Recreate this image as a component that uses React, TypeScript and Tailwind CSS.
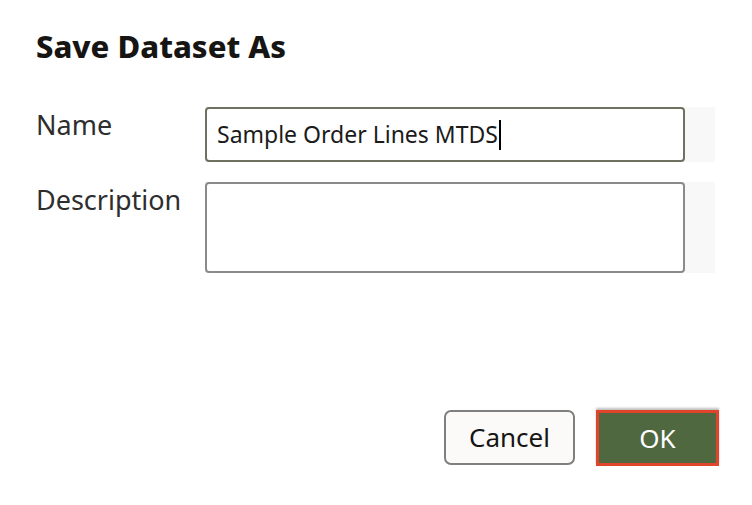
import React from "react";

export default function App() {
  const font = { fontFamily: '"Noto Sans", "Open Sans", sans-serif' };
  return (
    <div className="w-[752px] h-[505px] bg-white overflow-hidden flex flex-col" style={font}>
      <div className="pl-[36px] pt-[26px] text-[31px] leading-[40px] font-extrabold text-[#161513]">
        Save Dataset As
      </div>
      <div className="mt-[41px] flex flex-col gap-[20px] pl-[36px]">
        <div className="flex items-start">
          <div className="w-[169px] text-[27px] leading-[36px] text-[#2e2e2e]">Name</div>
          <div className="w-[510px] bg-[#f8f8f8]">
            <div className="w-[480px] h-[55px] border-2 border-[#6c725f] rounded-[4px] bg-white flex items-center pl-[10px] text-[23px] text-[#1b1b1b]">
              <span>Sample Order Lines MTDS</span>
              <span className="w-[2px] h-[30px] bg-black ml-[1px]" />
            </div>
          </div>
        </div>
        <div className="flex items-start">
          <div className="w-[169px] text-[27px] leading-[36px] text-[#2e2e2e]">Description</div>
          <div className="w-[510px] bg-[#f8f8f8]">
            <div className="w-[480px] h-[91px] border-2 border-[#8a8a8a] rounded-[4px] bg-white" />
          </div>
        </div>
      </div>
      <div className="mt-[137px] flex justify-end gap-[21px] pr-[33px]">
        <button className="w-[131px] h-[55px] rounded-[7px] border-2 border-[#7f7f7f] bg-[#fbfaf8] text-[26px] text-[#161513] flex items-center justify-center">
          Cancel
        </button>
        <button className="w-[123px] h-[56px] border-[3px] border-[#e0452b] bg-[#4f6840] text-[26px] text-white flex items-center justify-center shadow-[0_-2px_2px_rgba(0,0,0,0.25)]">
          OK
        </button>
      </div>
    </div>
  );
}
